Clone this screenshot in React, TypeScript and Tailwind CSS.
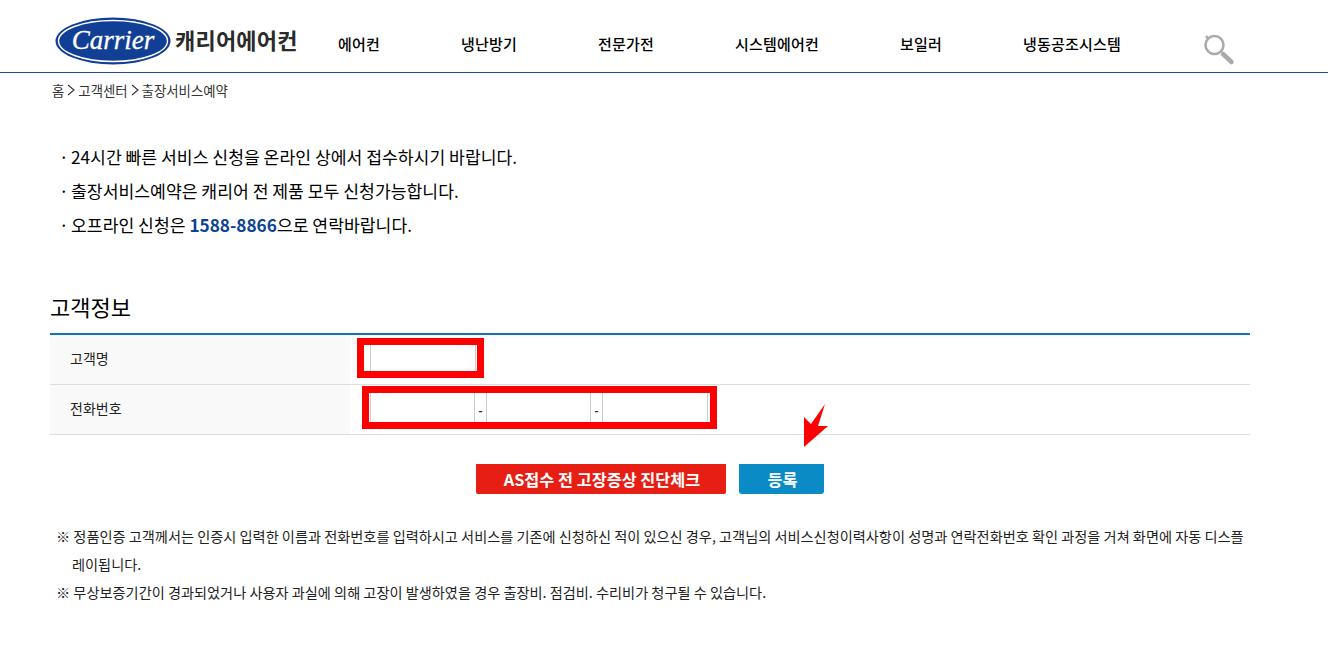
const font = { fontFamily: '"Noto Sans CJK KR", "Noto Sans", sans-serif' };

const navItems = ["에어컨", "냉난방기", "전문가전", "시스템에어컨", "보일러", "냉동공조시스템"];

const guideLines = [
  <>24시간 빠른 서비스 신청을 온라인 상에서 접수하시기 바랍니다.</>,
  <>출장서비스예약은 캐리어 전 제품 모두 신청가능합니다.</>,
  <>
    오프라인 신청은 <b className="font-bold text-[#0b4395]">1588-8866</b>으로 연락바랍니다.
  </>,
];

const crumbs = ["홈", "고객센터", "출장서비스예약"];

function Logo() {
  return (
    <svg width="116" height="48" viewBox="0 0 116 48" className="shrink-0">
      <ellipse cx="58" cy="24" rx="57.5" ry="23.5" fill="#123f96" />
      <ellipse cx="58" cy="24" rx="54.5" ry="20.5" fill="none" stroke="#fff" strokeWidth="1.4" />
      <text
        x="58"
        y="32"
        textAnchor="middle"
        fill="#fff"
        stroke="#fff"
        strokeWidth="0.3"
        fontSize="27"
        fontStyle="italic"
        fontFamily='"Liberation Serif", serif'
      >
        Carrier
      </text>
    </svg>
  );
}

function SearchIcon() {
  return (
    <svg width="32" height="34" viewBox="0 0 32 34">
      <circle cx="10.5" cy="13" r="9" fill="none" stroke="#aaa" strokeWidth="2.6" />
      <circle cx="3" cy="5" r="1.6" fill="#aaa" />
      <path d="M19 22 L27.5 30" stroke="#aaa" strokeWidth="4.5" strokeLinecap="round" />
    </svg>
  );
}

function Header() {
  return (
    <header className="flex h-[73px] items-start border-b border-[#1b4f96] pl-[55px]">
      <div className="mt-[17px] flex items-center">
        <Logo />
        <span className="ml-1 mt-[-5px] w-[163px] text-[22px] leading-6 font-bold tracking-[0.2px] text-[#2a2a2a]">
          캐리어에어컨
        </span>
      </div>
      <nav className="mt-[32px] flex gap-[81px] text-[15px] leading-6 font-medium tracking-[0.2px] text-black">
        {navItems.map((item) => (
          <span key={item}>{item}</span>
        ))}
      </nav>
      <div className="ml-[83px] mt-[32px]">
        <SearchIcon />
      </div>
    </header>
  );
}

function Breadcrumb() {
  return (
    <div className="flex items-center gap-[3px] pl-[52px] pt-2 text-[13.4px] leading-[18px] text-[#333]">
      {crumbs.map((crumb, i) => (
        <span key={crumb} className="flex items-center gap-[3px]">
          {i > 0 && (
            <svg width="8" height="12" viewBox="0 0 8 12">
              <path d="M1 1 L7 6 L1 11" fill="none" stroke="#333" strokeWidth="1.1" />
            </svg>
          )}
          {crumb}
        </span>
      ))}
    </div>
  );
}

function Field({ className }: { className: string }) {
  return <div className={`h-full border-x border-[#ccc] bg-white ${className}`} />;
}

function CustomerForm() {
  return (
    <div className="relative border-t-2 border-[#0f75b8] text-[14px] text-[#222]">
      <div className="flex h-[50px] border-b border-[#ddd]">
        <div className="flex w-[300px] items-center bg-[#f9f9f9] pb-[2px] pl-5">고객명</div>
        <div className="ml-5 flex h-full items-center">
          <Field className="h-[36px]! w-[106px]" />
        </div>
      </div>
      <div className="flex h-[50px] border-b border-[#ddd]">
        <div className="flex w-[300px] items-center bg-[#f9f9f9] pb-[2px] pl-5">전화번호</div>
        <div className="ml-5 flex h-full items-center py-[7px]">
          <Field className="w-[105px]" />
          <span className="w-[11px] text-center text-[12px] font-bold text-[#333]">-</span>
          <Field className="w-[105px]" />
          <span className="w-[11px] text-center text-[12px] font-bold text-[#333]">-</span>
          <Field className="w-[106px]" />
        </div>
      </div>

      {/* red marker boxes drawn over the form */}
      <div className="absolute left-[307px] top-[3px] h-[40px] w-[127px] border-[7px] border-[#ff0000]" />
      <div className="absolute left-[312px] top-[51px] h-[43px] w-[355px] border-[7px] border-[#ff0000]" />
      <svg width="26" height="44" viewBox="0 0 26 44" className="absolute left-[753px] top-[69px]">
        <path d="M1 43 L1 13 L8 20 L22 0 L15 22 L25 22 Z" fill="#ff0000" />
      </svg>
    </div>
  );
}

export default function App() {
  return (
    <div className="min-h-[660px] bg-white" style={font}>
      <Header />
      <Breadcrumb />

      <main className="w-[1300px] px-[50px]">
        <ul className="mt-[41px] text-[17.2px] leading-[34px] text-black">
          {guideLines.map((line, i) => (
            <li key={i} className="flex">
              <span className="w-[21px] pl-[9px]">·</span>
              <span>{line}</span>
            </li>
          ))}
        </ul>

        <h2 className="mt-[48px] text-[22px] leading-8 font-normal text-black">고객정보</h2>
        <div className="mt-[11px]">
          <CustomerForm />
        </div>

        <div className="mt-[29px] flex justify-center gap-[13px] text-[16.3px] font-bold text-white">
          <button className="h-[30px] w-[250px] rounded-b-[2px] bg-[#e61e14] pl-[2px]">AS접수 전 고장증상 진단체크</button>
          <button className="h-[30px] w-[85px] rounded-b-[3px] bg-[#0a8bc6] pl-[2px]">등록</button>
        </div>

        <div className="mt-[28px] pl-[5px] text-[14.2px] leading-[28px] text-[#222]">
          <p className="pl-[17px] -indent-[16px]">
            ※ 정품인증 고객께서는 인증시 입력한 이름과 전화번호를 입력하시고 서비스를 기존에 신청하신 적이 있으신 경우, 고객님의 서비스신청이력사항이 성명과 연락전화번호 확인 과정을 거쳐 화면에 자동 디스플레이됩니다.
          </p>
          <p className="pl-[17px] -indent-[16px]">
            ※ 무상보증기간이 경과되었거나 사용자 과실에 의해 고장이 발생하였을 경우 출장비. 점검비. 수리비가 청구될 수 있습니다.
          </p>
        </div>
      </main>
    </div>
  );
}
